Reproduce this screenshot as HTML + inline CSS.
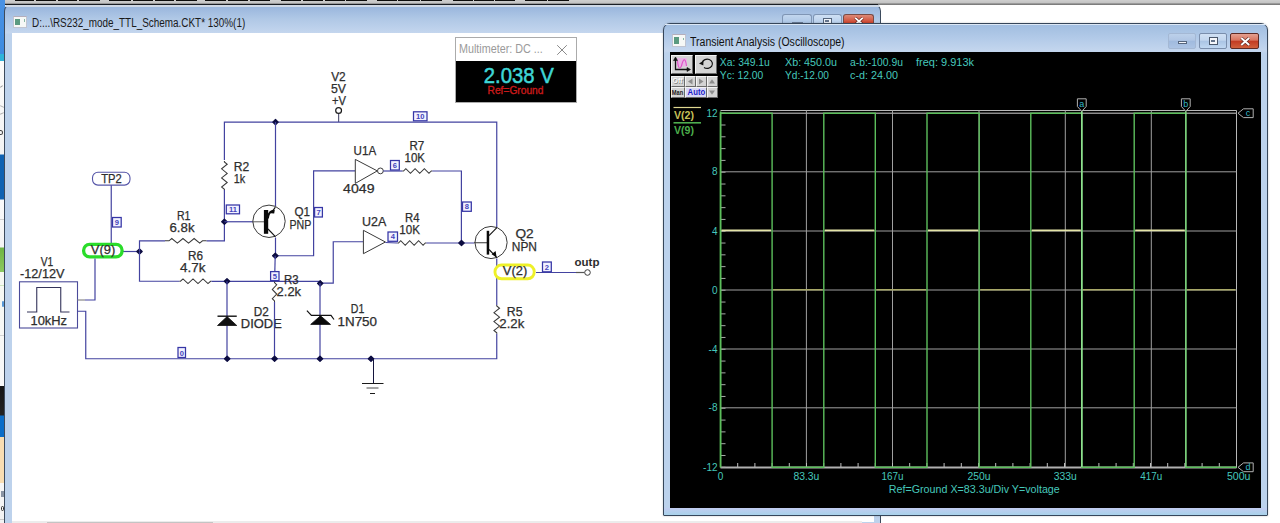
<!DOCTYPE html>
<html><head><meta charset="utf-8"><title>RS232 mode TTL Schema</title>
<style>
html,body{margin:0;padding:0;background:#fff;}
body{width:1280px;height:523px;overflow:hidden;position:relative;font-family:"Liberation Sans", "DejaVu Sans", sans-serif;}
.abs{position:absolute;}
svg text{font-family:"Liberation Sans", "DejaVu Sans", sans-serif;}
.btn{position:absolute;background:#d4d4d4;border-top:1px solid #f4f4f4;border-left:1px solid #f4f4f4;border-right:1px solid #6a6a6a;border-bottom:1px solid #6a6a6a;box-sizing:border-box;}
</style></head><body>

<!-- top strip -->
<div class="abs" style="left:0;top:0;width:1280px;height:5px;background:linear-gradient(#cfcfcf 0,#c4c4c4 55%,#9a9a9a 70%,#6e6e6e 100%)"></div>
<div class="abs" style="left:5px;top:3.5px;width:873px;height:1px;background:#222"></div>
<div style="position:absolute;left:14.5px;top:0;width:19.5px;height:1.1px;background:#0c0c0c"></div><div style="position:absolute;left:36px;top:0;width:20px;height:1.1px;background:#0c0c0c"></div><div style="position:absolute;left:58px;top:0;width:19px;height:1.1px;background:#0c0c0c"></div><div style="position:absolute;left:79px;top:0;width:21px;height:1.1px;background:#0c0c0c"></div><div style="position:absolute;left:109px;top:0;width:22px;height:1.1px;background:#0c0c0c"></div><div style="position:absolute;left:133px;top:0;width:20px;height:1.1px;background:#0c0c0c"></div><div style="position:absolute;left:155px;top:0;width:19px;height:1.1px;background:#0c0c0c"></div><div style="position:absolute;left:176px;top:0;width:21px;height:1.1px;background:#0c0c0c"></div><div style="position:absolute;left:205px;top:0;width:21px;height:1.1px;background:#0c0c0c"></div><div style="position:absolute;left:227.5px;top:0;width:20.5px;height:1.1px;background:#0c0c0c"></div><div style="position:absolute;left:249.5px;top:0;width:20.5px;height:1.1px;background:#0c0c0c"></div><div style="position:absolute;left:281px;top:0;width:20px;height:1.1px;background:#0c0c0c"></div><div style="position:absolute;left:302.5px;top:0;width:20.5px;height:1.1px;background:#0c0c0c"></div><div style="position:absolute;left:324.5px;top:0;width:20.0px;height:1.1px;background:#0c0c0c"></div><div style="position:absolute;left:346px;top:0;width:21px;height:1.1px;background:#0c0c0c"></div><div style="position:absolute;left:376.5px;top:0;width:20.0px;height:1.1px;background:#0c0c0c"></div><div style="position:absolute;left:398px;top:0;width:21.5px;height:1.1px;background:#0c0c0c"></div><div style="position:absolute;left:421px;top:0;width:21px;height:1.1px;background:#0c0c0c"></div><div style="position:absolute;left:453px;top:0;width:19.5px;height:1.1px;background:#0c0c0c"></div><div style="position:absolute;left:474px;top:0;width:19.5px;height:1.1px;background:#0c0c0c"></div><div style="position:absolute;left:495px;top:0;width:20px;height:1.1px;background:#0c0c0c"></div><div style="position:absolute;left:525px;top:0;width:21.5px;height:1.1px;background:#0c0c0c"></div><div style="position:absolute;left:548px;top:0;width:20.5px;height:1.1px;background:#0c0c0c"></div>

<!-- left desktop strip -->
<div class="abs" style="left:0;top:0;width:5px;height:523px;background:linear-gradient(#4a92e4 0,#3d8be0 54px,#2cb4da 54.5px,#2cb4da 61px,#fbfbfb 61.5px,#f3f3f3 154px,#0f62b2 155px,#0f62b2 199px,#fafafa 200px,#f4f4f4 247px,#6fb544 248px,#8cc860 271.5px,#f6f8f2 272.5px,#f8f8f8 385.5px,#161616 386.5px,#222 415px,#0a6dc8 416px,#0a6dc8 436.5px,#f8ddb2 437.5px,#f8ddb2 482.5px,#f6f6f6 483.5px,#f2f2f2 523px)"></div>
<div class="abs" style="left:0;top:86px;width:3px;height:1.2px;background:#9a9a9a;transform:rotate(-35deg)"></div>
<div class="abs" style="left:0;top:106px;width:4px;height:1.2px;background:#b0b0b0;transform:rotate(25deg)"></div>
<div class="abs" style="left:0;top:113px;width:4px;height:1.2px;background:#b0b0b0;transform:rotate(-25deg)"></div>
<div class="abs" style="left:0;top:130px;width:3px;height:5px;border:1.2px solid #444;border-left:none;border-radius:0 3px 3px 0;box-sizing:border-box"></div>
<div class="abs" style="left:0;top:219px;width:4px;height:1px;background:#d0d0d0"></div>
<div class="abs" style="left:0;top:285px;width:4px;height:1px;background:#cfe6c0"></div>
<div class="abs" style="left:1.5px;top:301px;width:2.5px;height:6px;background:#5a9ad8;border-radius:1px"></div>
<div class="abs" style="left:0;top:335px;width:4px;height:1px;background:#d4d4d4"></div>
<div class="abs" style="left:1px;top:491px;width:3px;height:6px;background:#8a94a4"></div>
<div class="abs" style="left:0.5px;top:506px;width:3.5px;height:5px;border:1.2px solid #333;box-sizing:border-box;border-radius:1.5px"></div>
<div class="abs" style="left:0;top:519px;width:4px;height:1px;background:#c8c8c8"></div>

<!-- circuit window -->
<div class="abs" style="left:4px;top:4px;width:877px;height:531px;box-sizing:border-box;border:1px solid #3c4a5c;border-top-color:#1a1e24;border-radius:7px 7px 0 0;background:linear-gradient(#9ab6dc 0,#9cb8de 3px,#b0c8e6 14px,#c4d6ee 28px,#bdd2ec 29px,#bdd2ec 100%)">
  <div class="abs" style="left:0;top:0;right:0;height:2.2px;background:#ced8e6;border-radius:6px 6px 0 0"></div>
  <!-- icon -->
  <div class="abs" style="left:8px;top:10.5px;width:14px;height:12px;background:#f6f8f6;border:1px solid #c0c4d0;border-top-color:#b4aebc;box-sizing:border-box"><div class="abs" style="left:1px;top:2px;width:5px;height:6.5px;background:#5a9a80"></div><div class="abs" style="left:9.5px;top:2.5px;width:1.5px;height:2.5px;background:#8ab8a4"></div></div>
  <div class="abs" style="left:27px;top:10.5px;font-size:12px;line-height:14px;color:#1a1a1a;white-space:nowrap;transform:scaleX(0.826);transform-origin:0 0" id="t1">D:...\RS232_mode_TTL_Schema.CKT* 130%(1)</div>
  <!-- buttons -->
  <div class="abs" style="left:777px;top:9px;width:28px;height:11px;border:1px solid #7f95b4;border-bottom:none;border-radius:3px 3px 0 0;background:linear-gradient(#c2d6ee,#a4c0e2)"><div class="abs" style="left:9px;top:7px;width:9px;height:3px;background:#eef2f8;border:1px solid #6a7c96"></div></div>
  <div class="abs" style="left:808px;top:9px;width:27px;height:11px;border:1px solid #7f95b4;border-bottom:none;border-radius:3px 3px 0 0;background:linear-gradient(#cfe0f4,#b0c9e8)"><div class="abs" style="left:8.5px;top:2.5px;width:9px;height:9px;border:1.5px solid #55657c;background:#eef2f8;box-sizing:border-box"><div class="abs" style="left:1px;top:1.5px;width:4px;height:2px;background:#65758c"></div></div></div>
  <div class="abs" style="left:838px;top:8.5px;width:29px;height:12px;border:1px solid #7a4a44;border-bottom:none;border-radius:3px 3px 0 0;background:linear-gradient(#dd8a78,#cf4a34 60%,#c03420)"><svg class="abs" style="left:9.5px;top:2.5px" width="10" height="8.5" viewBox="0 0 12 10"><path d="M1.5 1 L10.5 9 M10.5 1 L1.5 9" stroke="#6a2a22" stroke-width="3.8" fill="none"/><path d="M1.5 1 L10.5 9 M10.5 1 L1.5 9" stroke="#fff" stroke-width="2.2" fill="none"/></svg></div>
  <!-- client -->
  <div class="abs" style="left:7px;top:28px;width:862px;height:489px;background:#fff"></div>
  <!-- bottom scrollbar -->
  <div class="abs" style="left:7px;top:516px;width:850px;height:4px;background:#ececec"></div>
  <div class="abs" style="left:42px;top:516.5px;width:166px;height:4px;background:#c4c4c4"></div>
</div>

<!-- multimeter -->
<div class="abs" style="left:455px;top:37px;width:121.5px;height:66px;box-sizing:border-box;border:1px solid #ababab;background:#fff">
  <div class="abs" style="left:0;top:23px;width:119.5px;height:41px;background:#000"></div>
  <div class="abs" style="left:3px;top:4px;font-size:12px;line-height:14px;color:#9a9a9a;white-space:nowrap;transform:scaleX(0.897);transform-origin:0 0" id="mmt">Multimeter: DC ...</div>
  <svg class="abs" style="left:100px;top:6px" width="12" height="12" viewBox="0 0 12 12"><path d="M1.2 1.2 L10.8 10.8 M10.8 1.2 L1.2 10.8" stroke="#8a8a8a" stroke-width="1" fill="none"/></svg>
</div>

<!-- scope window -->
<div class="abs" style="left:663px;top:23px;width:605px;height:493px;box-sizing:border-box;border:1px solid #36465a;border-radius:7px 7px 1px 1px;background:linear-gradient(#a0bde0 0,#b2cae8 14px,#c4d6ee 27px,#bcd2ec 29px,#bcd2ec 100%);box-shadow:0 0 2px rgba(0,0,0,.25)">
  <div class="abs" style="left:1px;top:0;right:1px;height:1px;background:#dce8f6"></div>
  <div class="abs" style="left:0;bottom:0;width:603px;height:7px;background:linear-gradient(#c2ccf0,#a8d2ea)"></div>
  <div class="abs" style="left:6px;top:28px;width:591px;height:456px;background:#000"></div>
  <!-- icon -->
  <div class="abs" style="left:8px;top:10px;width:14px;height:12.5px;background:#f6f8f6;border:1px solid #c0c4d0;border-top-color:#b4aebc;box-sizing:border-box"><div class="abs" style="left:1px;top:2px;width:5px;height:7px;background:#5a9a80"></div><div class="abs" style="left:9.5px;top:2.5px;width:1.5px;height:2.5px;background:#8ab8a4"></div></div>
  <div class="abs" style="left:26px;top:10.5px;font-size:12px;line-height:14px;color:#111;white-space:nowrap;transform:scaleX(0.877);transform-origin:0 0" id="t2">Transient Analysis (Oscilloscope)</div>
  <!-- caption buttons -->
  <div class="abs" style="left:504px;top:9px;width:28px;height:16px;box-sizing:border-box;border:1px solid #a4b8d4;border-radius:2px;background:linear-gradient(#bcd0ea 0,#b0c6e4 45%,#a0bade 50%,#acc4e4 100%)"><div class="abs" style="left:9px;top:7px;width:9px;height:3px;box-sizing:border-box;background:#f4f6fa;border:1px solid #55657c"></div></div>
  <div class="abs" style="left:535px;top:9px;width:28px;height:16px;box-sizing:border-box;border:1px solid #7a8eac;border-radius:2px;background:linear-gradient(#d0e0f4 0,#c2d6ee 45%,#aac4e4 50%,#c0d8f2 100%)"><div class="abs" style="left:9px;top:3px;width:9px;height:8px;box-sizing:border-box;background:#f4f6fa;border:1.5px solid #4a586c"><div class="abs" style="left:1px;top:1.5px;width:4px;height:2px;background:#65758c"></div></div></div>
  <div class="abs" style="left:566px;top:9px;width:29px;height:16px;box-sizing:border-box;border:1px solid #5e2a24;border-radius:2px;background:linear-gradient(#e4a090 0,#d8745e 45%,#c23a22 50%,#d0603c 100%)"><svg class="abs" style="left:8.5px;top:2.5px" width="10.5" height="9" viewBox="0 0 12 10"><path d="M1.5 1 L10.5 9 M10.5 1 L1.5 9" stroke="#5a2a24" stroke-width="3.6" fill="none"/><path d="M1.5 1 L10.5 9 M10.5 1 L1.5 9" stroke="#fff" stroke-width="2.2" fill="none"/></svg></div>
</div>

<!-- scope toolbar buttons -->
<div class="btn" style="left:671px;top:55px;width:22px;height:19px"></div>
<div class="btn" style="left:695px;top:55px;width:22px;height:19px"></div>
<div class="btn" style="left:671px;top:76px;width:13.5px;height:10.5px"></div>
<div class="btn" style="left:685px;top:76px;width:10.5px;height:10.5px"></div>
<div class="btn" style="left:696px;top:76px;width:10.5px;height:10.5px"></div>
<div class="btn" style="left:707px;top:76px;width:10.5px;height:10.5px"></div>
<div class="btn" style="left:671px;top:87px;width:13.5px;height:10.5px"></div>
<div class="btn" style="left:685px;top:87px;width:21.5px;height:10.5px;background:#d8d8f6"></div>
<div class="btn" style="left:707px;top:87px;width:10.5px;height:10.5px"></div>

<svg class="abs" style="left:0;top:0" width="1280" height="523" viewBox="0 0 1280 523">
<!-- toolbar icons -->
<rect x="676.8" y="58" width="10" height="8.5" fill="#e8b4e4"/>
<g fill="none" stroke-width="1.3">
<path d="M675.5 58.5 L675.5 69.5 L688.5 69.5" stroke="#111"/>
<path d="M673.5 60.5 L675.5 57 L677.5 60.5 Z M687 67.5 L690.5 69.5 L687 71.5 Z" fill="#111" stroke="#111" stroke-width="0.6"/>
<path d="M677.5 61 C678.5 70 680.5 70 682 64 C683.5 58 685.5 58 686.5 66" stroke="#e050c8" stroke-width="1.1"/>
<path d="M702.2 62.6 A5.2 4.6 0 1 1 704 67.4" stroke="#111" stroke-width="1.2"/>
<path d="M699 63.5 L703.5 60.8 L703.3 65.6 Z" fill="#111" stroke="none"/>
</g>
<path d="M692.5 78.5 L692.5 84.5 L688 81.5 Z" fill="#8e8e8e"/>
<path d="M699 78.5 L699 84.5 L703.5 81.5 Z" fill="#8e8e8e"/>
<path d="M709 83.5 L715 83.5 L712 79.3 Z" fill="#8e8e8e"/>
<path d="M709 90.5 L715 90.5 L712 94.7 Z" fill="#8e8e8e"/>
<text x="673.2" y="83.8" font-size="8" font-weight="bold" fill="#8a8a8a" textLength="10" lengthAdjust="spacingAndGlyphs">Off</text>
<text x="672.6" y="83.3" font-size="8" font-weight="bold" fill="#fafafa" textLength="10" lengthAdjust="spacingAndGlyphs">Off</text>
<text x="671.8" y="95" font-size="8" font-weight="bold" fill="#1a1a1a" textLength="11.4" lengthAdjust="spacingAndGlyphs">Man</text>
<text x="687.6" y="95" font-size="8.2" font-weight="bold" fill="#1c1cc8" textLength="17.6" lengthAdjust="spacingAndGlyphs">Auto</text>
<!-- multimeter reading -->
<text x="483.8" y="82.5" font-size="21.5" fill="#3fd6d6" stroke="#3fd6d6" stroke-width="0.5" textLength="70" lengthAdjust="spacingAndGlyphs">2.038 V</text>
<text x="487.5" y="94.3" font-size="10.5" fill="#c81a1a" stroke="#c81a1a" stroke-width="0.35" textLength="56" lengthAdjust="spacingAndGlyphs">Ref=Ground</text>
<text x="331.2" y="80.5" font-size="12" fill="#2e2e2e" text-anchor="start" font-weight="normal" stroke="#2e2e2e" stroke-width="0.25" textLength="14.5" lengthAdjust="spacingAndGlyphs" >V2</text>
<text x="331" y="92.5" font-size="12" fill="#2e2e2e" text-anchor="start" font-weight="normal" stroke="#2e2e2e" stroke-width="0.25" textLength="15" lengthAdjust="spacingAndGlyphs" >5V</text>
<text x="332" y="105" font-size="12" fill="#2e2e2e" text-anchor="start" font-weight="normal" stroke="#2e2e2e" stroke-width="0.25" textLength="14" lengthAdjust="spacingAndGlyphs" >+V</text>
<path d="M338.60 113.50 L338.60 122.10" fill="none" stroke="#5a5a78" stroke-width="1.2" />
<circle cx="338.6" cy="110.5" r="2.9" fill="#fff" stroke="#1a1a1a" stroke-width="1.2"/>
<path d="M224.40 160.00 L224.40 122.10 L496.75 122.10 L496.75 227.00" fill="none" stroke="#4343a0" stroke-width="1.2" />
<path d="M272.80 122.1 L275.5 119.40 L278.20 122.1 L275.5 124.80 Z" fill="#0c0c40" stroke="#0c0c40" stroke-width="1.2" stroke-linejoin="round"/>
<rect x="413.5" y="111.8" width="13.5" height="9.0" fill="#f2f2ff" stroke="#3636a6" stroke-width="1.25"/>
<text x="420.25" y="118.8" font-size="7.6" fill="#4444bc" text-anchor="middle" font-weight="bold" >10</text>
<path d="M275.50 122.10 L275.50 206.00" fill="none" stroke="#4343a0" stroke-width="1.2" />
<path d="M224.40 161.00 L224.40 162.00 L227.20 164.28 L221.60 168.82 L227.20 173.38 L221.60 177.93 L227.20 182.48 L221.60 187.03 L224.40 189.30 L224.40 190.30" fill="none" stroke="#3a3a3a" stroke-width="1.05" stroke-linejoin="miter"/>
<text x="233.8" y="171.3" font-size="12" fill="#2e2e2e" text-anchor="start" font-weight="normal" stroke="#2e2e2e" stroke-width="0.25" textLength="15.5" lengthAdjust="spacingAndGlyphs" >R2</text>
<text x="233.8" y="183.3" font-size="12" fill="#2e2e2e" text-anchor="start" font-weight="normal" stroke="#2e2e2e" stroke-width="0.25" textLength="11.5" lengthAdjust="spacingAndGlyphs" >1k</text>
<path d="M224.40 190.00 L224.40 240.80 L206.50 240.80" fill="none" stroke="#4343a0" stroke-width="1.2" />
<path d="M221.70 221.75 L224.4 219.05 L227.10 221.75 L224.4 224.45 Z" fill="#0c0c40" stroke="#0c0c40" stroke-width="1.2" stroke-linejoin="round"/>
<rect x="226.3" y="205" width="13.199999999999989" height="8.800000000000011" fill="#f2f2ff" stroke="#3636a6" stroke-width="1.25"/>
<text x="232.9" y="211.8" font-size="7.6" fill="#4444bc" text-anchor="middle" font-weight="bold" >11</text>
<path d="M224.40 221.75 L253.00 221.75" fill="none" stroke="#4343a0" stroke-width="1.2" />
<path d="M252.50 221.75 L264.00 221.75" fill="none" stroke="#777" stroke-width="1.2" />
<rect x="92.5" y="172.3" width="37.5" height="12.8" rx="5.5" ry="5.5" fill="#fff" stroke="#5555a8" stroke-width="1.1"/>
<text x="101.3" y="183.2" font-size="12" fill="#2e2e2e" text-anchor="start" font-weight="normal" stroke="#2e2e2e" stroke-width="0.25" textLength="20.5" lengthAdjust="spacingAndGlyphs" >TP2</text>
<path d="M111.25 185.20 L111.25 244.50" fill="none" stroke="#4343a0" stroke-width="1.2" />
<rect x="112.5" y="217.5" width="8.700000000000003" height="9.5" fill="#f2f2ff" stroke="#3636a6" stroke-width="1.25"/>
<text x="116.85" y="225.0" font-size="7.6" fill="#4444bc" text-anchor="middle" font-weight="bold" >9</text>
<path d="M123.00 251.50 L139.50 251.50" fill="none" stroke="#4343a0" stroke-width="1.2" />
<rect x="83.6" y="244.4" width="38.5" height="12.4" rx="6" ry="6" fill="#fff" stroke="#2adc2a" stroke-width="3.3"/>
<text x="90.8" y="253.7" font-size="12" fill="#2e2e2e" text-anchor="start" font-weight="normal" stroke="#2e2e2e" stroke-width="0.25" textLength="24.4" lengthAdjust="spacingAndGlyphs" >V(9)</text>
<path d="M136.80 251.5 L139.5 248.80 L142.20 251.5 L139.5 254.20 Z" fill="#0c0c40" stroke="#0c0c40" stroke-width="1.2" stroke-linejoin="round"/>
<path d="M139.50 251.50 L139.50 240.80 L165.00 240.80" fill="none" stroke="#4343a0" stroke-width="1.2" />
<path d="M165.00 240.80 L169.00 240.80 L171.79 238.50 L177.38 243.10 L182.96 238.50 L188.54 243.10 L194.12 238.50 L199.71 243.10 L202.50 240.80 L206.50 240.80" fill="none" stroke="#3a3a3a" stroke-width="1.05" stroke-linejoin="miter"/>
<text x="177" y="220" font-size="12" fill="#2e2e2e" text-anchor="start" font-weight="normal" stroke="#2e2e2e" stroke-width="0.25" textLength="13.5" lengthAdjust="spacingAndGlyphs" >R1</text>
<text x="169.5" y="232" font-size="12" fill="#2e2e2e" text-anchor="start" font-weight="normal" stroke="#2e2e2e" stroke-width="0.25" textLength="25" lengthAdjust="spacingAndGlyphs" >6.8k</text>
<path d="M139.50 251.50 L139.50 281.25 L179.50 281.25" fill="none" stroke="#4343a0" stroke-width="1.2" />
<path d="M179.50 281.25 L180.50 281.25 L183.00 278.95 L188.00 283.55 L193.00 278.95 L198.00 283.55 L203.00 278.95 L208.00 283.55 L210.50 281.25 L211.50 281.25" fill="none" stroke="#3a3a3a" stroke-width="1.05" stroke-linejoin="miter"/>
<text x="188" y="260" font-size="12" fill="#2e2e2e" text-anchor="start" font-weight="normal" stroke="#2e2e2e" stroke-width="0.25" textLength="15" lengthAdjust="spacingAndGlyphs" >R6</text>
<text x="180" y="272" font-size="12" fill="#2e2e2e" text-anchor="start" font-weight="normal" stroke="#2e2e2e" stroke-width="0.25" textLength="25.5" lengthAdjust="spacingAndGlyphs" >4.7k</text>
<path d="M211.50 281.30 L319.50 281.40" fill="none" stroke="#4343a0" stroke-width="1.2" />
<path d="M320.00 283.20 L333.25 283.20 L333.25 241.75 L363.00 241.75" fill="none" stroke="#4343a0" stroke-width="1.2" />
<path d="M224.30 281.25 L227 278.55 L229.70 281.25 L227 283.95 Z" fill="#0c0c40" stroke="#0c0c40" stroke-width="1.2" stroke-linejoin="round"/>
<path d="M317.50 283.3 L320.2 280.60 L322.90 283.3 L320.2 286.00 Z" fill="#0c0c40" stroke="#0c0c40" stroke-width="1.2" stroke-linejoin="round"/>
<rect x="19.5" y="281.8" width="58" height="46.2" fill="#fff" stroke="#4a4a9a" stroke-width="1.1"/>
<path d="M27.00 312.00 L36.75 312.00 L36.75 287.50 L60.75 287.50 L60.75 312.00 L69.50 312.00" fill="none" stroke="#34345a" stroke-width="1.1" />
<text x="40.8" y="265.8" font-size="12" fill="#2e2e2e" text-anchor="start" font-weight="normal" stroke="#2e2e2e" stroke-width="0.25" textLength="12.5" lengthAdjust="spacingAndGlyphs" >V1</text>
<text x="20" y="278" font-size="12" fill="#2e2e2e" text-anchor="start" font-weight="normal" stroke="#2e2e2e" stroke-width="0.25" textLength="44.5" lengthAdjust="spacingAndGlyphs" >-12/12V</text>
<text x="30.5" y="325" font-size="12" fill="#2e2e2e" text-anchor="start" font-weight="normal" stroke="#2e2e2e" stroke-width="0.25" textLength="36.5" lengthAdjust="spacingAndGlyphs" >10kHz</text>
<path d="M77.50 300.00 L85.00 300.00" fill="none" stroke="#888" stroke-width="1.2" />
<path d="M85.00 300.00 L95.00 300.00 L95.00 258.50" fill="none" stroke="#4343a0" stroke-width="1.2" />
<path d="M77.50 311.25 L85.75 311.25 L85.75 358.75 L496.75 358.75 L496.75 333.75" fill="none" stroke="#4343a0" stroke-width="1.2" />
<rect x="178" y="347.5" width="7.5" height="10.0" fill="#f2f2ff" stroke="#3636a6" stroke-width="1.25"/>
<text x="181.75" y="355.5" font-size="7.6" fill="#4444bc" text-anchor="middle" font-weight="bold" >0</text>
<path d="M227.00 281.25 L227.00 358.75" fill="none" stroke="#4343a0" stroke-width="1.2" />
<path d="M217.5 325.5 L236.75 325.5 L227.1 316.6 Z" fill="#111" stroke="#111" stroke-width="0.8"/>
<path d="M217.50 316.20 L236.75 316.20" fill="none" stroke="#111" stroke-width="1.4" />
<text x="253.8" y="315.8" font-size="12" fill="#2e2e2e" text-anchor="start" font-weight="normal" stroke="#2e2e2e" stroke-width="0.25" textLength="15" lengthAdjust="spacingAndGlyphs" >D2</text>
<text x="240.8" y="328.2" font-size="12" fill="#2e2e2e" text-anchor="start" font-weight="normal" stroke="#2e2e2e" stroke-width="0.25" textLength="41" lengthAdjust="spacingAndGlyphs" >DIODE</text>
<path d="M224.50 358.75 L227.2 356.05 L229.90 358.75 L227.2 361.45 Z" fill="#0c0c40" stroke="#0c0c40" stroke-width="1.2" stroke-linejoin="round"/>
<circle cx="269" cy="221.3" r="16.2" fill="none" stroke="#3a3a3a" stroke-width="1"/>
<rect x="263.9" y="210" width="4.3" height="23.8" fill="#0a0a0a"/>
<path d="M268 218.5 L268 213.6 Q269.4 210.6 272 210 L274.8 209.8 L274.2 213.4 L270.8 213.3 Q269.4 214.2 268.9 218.5 Z" fill="#0a0a0a"/>
<path d="M273.00 210.40 L275.40 207.20" fill="none" stroke="#111" stroke-width="1.1" />
<path d="M268.00 229.00 L275.40 236.60" fill="none" stroke="#111" stroke-width="1.1" />
<text x="294.5" y="216.3" font-size="12" fill="#2e2e2e" text-anchor="start" font-weight="normal" stroke="#2e2e2e" stroke-width="0.25" textLength="15.5" lengthAdjust="spacingAndGlyphs" >Q1</text>
<text x="289.5" y="228.8" font-size="12" fill="#2e2e2e" text-anchor="start" font-weight="normal" stroke="#2e2e2e" stroke-width="0.25" textLength="21.8" lengthAdjust="spacingAndGlyphs" >PNP</text>
<rect x="314.6" y="207.5" width="7.7999999999999545" height="9.5" fill="#f2f2ff" stroke="#3636a6" stroke-width="1.25"/>
<text x="318.5" y="215.0" font-size="7.6" fill="#4444bc" text-anchor="middle" font-weight="bold" >7</text>
<path d="M275.50 237.50 L275.50 255.75 L313.60 255.75 L313.60 170.90 L355.00 170.90" fill="none" stroke="#4343a0" stroke-width="1.2" />
<path d="M272.60 255.75 L275.3 253.05 L278.00 255.75 L275.3 258.45 Z" fill="#0c0c40" stroke="#0c0c40" stroke-width="1.2" stroke-linejoin="round"/>
<path d="M275.20 255.75 L274.60 281.25" fill="none" stroke="#4343a0" stroke-width="1.2" />
<rect x="270.6" y="271.6" width="8.399999999999977" height="9.0" fill="#f2f2ff" stroke="#3636a6" stroke-width="1.25"/>
<text x="274.8" y="278.6" font-size="7.6" fill="#4444bc" text-anchor="middle" font-weight="bold" >5</text>
<path d="M274.50 281.50 L274.50 282.50 L276.70 284.81 L272.30 289.44 L276.70 294.06 L272.30 298.69 L274.50 301.00 L274.50 302.00" fill="none" stroke="#3a3a3a" stroke-width="1.05" stroke-linejoin="miter"/>
<path d="M274.50 302.00 L274.50 358.75" fill="none" stroke="#4343a0" stroke-width="1.2" />
<text x="284" y="283.6" font-size="12" fill="#2e2e2e" text-anchor="start" font-weight="normal" stroke="#2e2e2e" stroke-width="0.25" textLength="14.6" lengthAdjust="spacingAndGlyphs" >R3</text>
<text x="276.6" y="295.8" font-size="12" fill="#2e2e2e" text-anchor="start" font-weight="normal" stroke="#2e2e2e" stroke-width="0.25" textLength="24.5" lengthAdjust="spacingAndGlyphs" >2.2k</text>
<path d="M271.90 358.75 L274.6 356.05 L277.30 358.75 L274.6 361.45 Z" fill="#0c0c40" stroke="#0c0c40" stroke-width="1.2" stroke-linejoin="round"/>
<path d="M320.00 283.00 L320.00 358.75" fill="none" stroke="#4343a0" stroke-width="1.2" />
<path d="M310.7 324.4 L330.5 324.4 L320.5 315.8 Z" fill="#0a0a0a" stroke="#0a0a0a" stroke-width="0.8"/>
<path d="M306.90 310.70 L311.40 315.40 L331.00 315.40 L334.00 319.50" fill="none" stroke="#111" stroke-width="1.2" />
<text x="350.8" y="313.3" font-size="12" fill="#2e2e2e" text-anchor="start" font-weight="normal" stroke="#2e2e2e" stroke-width="0.25" textLength="13.5" lengthAdjust="spacingAndGlyphs" >D1</text>
<text x="337.5" y="326.3" font-size="12" fill="#2e2e2e" text-anchor="start" font-weight="normal" stroke="#2e2e2e" stroke-width="0.25" textLength="39.5" lengthAdjust="spacingAndGlyphs" >1N750</text>
<path d="M317.30 358.75 L320 356.05 L322.70 358.75 L320 361.45 Z" fill="#0c0c40" stroke="#0c0c40" stroke-width="1.2" stroke-linejoin="round"/>
<path d="M368.30 358.75 L371 356.05 L373.70 358.75 L371 361.45 Z" fill="#0c0c40" stroke="#0c0c40" stroke-width="1.2" stroke-linejoin="round"/>
<path d="M373.50 358.75 L373.50 383.50" fill="none" stroke="#14143c" stroke-width="1.0" />
<path d="M362.00 383.50 L383.50 383.50" fill="none" stroke="#1a1a1a" stroke-width="1.0" />
<path d="M366.50 388.00 L378.50 388.00" fill="none" stroke="#6a6a6a" stroke-width="1.2" />
<path d="M370.00 393.50 L375.00 393.50" fill="none" stroke="#1a1a1a" stroke-width="1.0" />
<path d="M355.3 159.4 L355.3 183.4 L377.3 170.9 Z" fill="#fff" stroke="#3a3a3a" stroke-width="1"/>
<circle cx="380.4" cy="170.9" r="2.9" fill="#fff" stroke="#3a3a3a" stroke-width="1"/>
<text x="353.6" y="154.8" font-size="12" fill="#2e2e2e" text-anchor="start" font-weight="normal" stroke="#2e2e2e" stroke-width="0.25" textLength="22.6" lengthAdjust="spacingAndGlyphs" >U1A</text>
<text x="343.1" y="193" font-size="12" fill="#2e2e2e" text-anchor="start" font-weight="normal" stroke="#2e2e2e" stroke-width="0.25" textLength="31.4" lengthAdjust="spacingAndGlyphs" >4049</text>
<path d="M383.30 171.00 L402.50 171.00" fill="none" stroke="#4343a0" stroke-width="1.2" />
<rect x="390.5" y="160.5" width="8.800000000000011" height="9.5" fill="#f2f2ff" stroke="#3636a6" stroke-width="1.25"/>
<text x="394.9" y="168.0" font-size="7.6" fill="#4444bc" text-anchor="middle" font-weight="bold" >6</text>
<path d="M402.50 171.00 L403.50 171.00 L405.82 168.70 L410.45 173.30 L415.08 168.70 L419.72 173.30 L424.35 168.70 L428.98 173.30 L431.30 171.00 L432.30 171.00" fill="none" stroke="#3a3a3a" stroke-width="1.05" stroke-linejoin="miter"/>
<text x="409.5" y="150" font-size="12" fill="#2e2e2e" text-anchor="start" font-weight="normal" stroke="#2e2e2e" stroke-width="0.25" textLength="14.8" lengthAdjust="spacingAndGlyphs" >R7</text>
<text x="404.5" y="162" font-size="12" fill="#2e2e2e" text-anchor="start" font-weight="normal" stroke="#2e2e2e" stroke-width="0.25" textLength="20.5" lengthAdjust="spacingAndGlyphs" >10K</text>
<path d="M432.30 171.00 L461.40 171.00 L461.40 243.00" fill="none" stroke="#4343a0" stroke-width="1.2" />
<rect x="462.5" y="202" width="8.800000000000011" height="9.300000000000011" fill="#f2f2ff" stroke="#3636a6" stroke-width="1.25"/>
<text x="466.9" y="209.3" font-size="7.6" fill="#4444bc" text-anchor="middle" font-weight="bold" >8</text>
<path d="M363.4 230.3 L363.4 253.7 L385.4 242 Z" fill="#fff" stroke="#3a3a3a" stroke-width="1"/>
<text x="362" y="226.3" font-size="12" fill="#2e2e2e" text-anchor="start" font-weight="normal" stroke="#2e2e2e" stroke-width="0.25" textLength="24.3" lengthAdjust="spacingAndGlyphs" >U2A</text>
<path d="M385.40 242.50 L397.50 243.00" fill="none" stroke="#4343a0" stroke-width="1.2" />
<rect x="388" y="232" width="9.5" height="9.300000000000011" fill="#f2f2ff" stroke="#3636a6" stroke-width="1.25"/>
<text x="392.75" y="239.3" font-size="7.6" fill="#4444bc" text-anchor="middle" font-weight="bold" >4</text>
<path d="M397.50 243.00 L398.50 243.00 L400.73 240.70 L405.20 245.30 L409.67 240.70 L414.13 245.30 L418.60 240.70 L423.07 245.30 L425.30 243.00 L426.30 243.00" fill="none" stroke="#3a3a3a" stroke-width="1.05" stroke-linejoin="miter"/>
<text x="405" y="221.8" font-size="12" fill="#2e2e2e" text-anchor="start" font-weight="normal" stroke="#2e2e2e" stroke-width="0.25" textLength="14.5" lengthAdjust="spacingAndGlyphs" >R4</text>
<text x="399.3" y="233.8" font-size="12" fill="#2e2e2e" text-anchor="start" font-weight="normal" stroke="#2e2e2e" stroke-width="0.25" textLength="20.7" lengthAdjust="spacingAndGlyphs" >10K</text>
<path d="M426.30 243.00 L474.00 243.00" fill="none" stroke="#4343a0" stroke-width="1.2" />
<path d="M474.00 242.70 L487.00 242.70" fill="none" stroke="#555" stroke-width="1.2" />
<path d="M458.80 243 L461.5 240.30 L464.20 243 L461.5 245.70 Z" fill="#0c0c40" stroke="#0c0c40" stroke-width="1.2" stroke-linejoin="round"/>
<circle cx="491.05" cy="242.5" r="16.1" fill="none" stroke="#3a3a3a" stroke-width="1"/>
<rect x="486.7" y="230.8" width="2.5" height="23.8" fill="#0a0a0a"/>
<path d="M489.00 235.60 L496.90 227.60" fill="none" stroke="#111" stroke-width="1.1" />
<path d="M489.00 249.50 L496.90 257.60" fill="none" stroke="#111" stroke-width="1.1" />
<path d="M496.6 257.2 L491.6 254.2 L495.6 251 Z" fill="#0a0a0a"/>
<text x="515.5" y="238" font-size="12" fill="#2e2e2e" text-anchor="start" font-weight="normal" stroke="#2e2e2e" stroke-width="0.25" textLength="18.2" lengthAdjust="spacingAndGlyphs" >Q2</text>
<text x="511.8" y="250.5" font-size="12" fill="#2e2e2e" text-anchor="start" font-weight="normal" stroke="#2e2e2e" stroke-width="0.25" textLength="25.2" lengthAdjust="spacingAndGlyphs" >NPN</text>
<path d="M496.75 258.50 L496.75 305.00" fill="none" stroke="#4343a0" stroke-width="1.2" />
<path d="M536.00 272.50 L576.00 272.50" fill="none" stroke="#4343a0" stroke-width="1.2" />
<path d="M576.00 272.50 L584.50 272.50" fill="none" stroke="#555" stroke-width="1.2" />
<rect x="495" y="265" width="39.2" height="13.8" rx="6.5" ry="6.5" fill="#fff" stroke="#eef028" stroke-width="2.9"/>
<text x="502.8" y="275.4" font-size="12" fill="#2e2e2e" text-anchor="start" font-weight="normal" stroke="#2e2e2e" stroke-width="0.25" textLength="24.4" lengthAdjust="spacingAndGlyphs" >V(2)</text>
<rect x="542.5" y="262" width="8.799999999999955" height="9.800000000000011" fill="#f2f2ff" stroke="#3636a6" stroke-width="1.25"/>
<text x="546.9" y="269.8" font-size="7.6" fill="#4444bc" text-anchor="middle" font-weight="bold" >2</text>
<circle cx="587.5" cy="272.5" r="2.8" fill="#fff" stroke="#3a3a3a" stroke-width="1"/>
<text x="574.5" y="265.5" font-size="11.5" fill="#2e2e2e" text-anchor="start" font-weight="bold" textLength="25" lengthAdjust="spacingAndGlyphs" >outp</text>
<path d="M496.75 305.00 L496.75 306.00 L499.55 308.23 L493.95 312.69 L499.55 317.15 L493.95 321.60 L499.55 326.06 L493.95 330.52 L496.75 332.75 L496.75 333.75" fill="none" stroke="#3a3a3a" stroke-width="1.05" stroke-linejoin="miter"/>
<text x="506.8" y="315.5" font-size="12" fill="#2e2e2e" text-anchor="start" font-weight="normal" stroke="#2e2e2e" stroke-width="0.25" textLength="15.7" lengthAdjust="spacingAndGlyphs" >R5</text>
<text x="499.3" y="328" font-size="12" fill="#2e2e2e" text-anchor="start" font-weight="normal" stroke="#2e2e2e" stroke-width="0.25" textLength="25" lengthAdjust="spacingAndGlyphs" >2.2k</text>
<path d="M720.50 110.50 L1236.50 110.50 L1236.50 468.00" fill="none" stroke="#b8b8b8" stroke-width="1" />
<path d="M720.50 113.20 L1236.50 113.20" fill="none" stroke="#8c8c8c" stroke-width="1.5" />
<path d="M806.40 110.50 L806.40 467.50" fill="none" stroke="#a0a0a0" stroke-width="1" />
<path d="M892.50 110.50 L892.50 467.50" fill="none" stroke="#a0a0a0" stroke-width="1" />
<path d="M979.00 110.50 L979.00 467.50" fill="none" stroke="#a0a0a0" stroke-width="1" />
<path d="M1065.30 110.50 L1065.30 467.50" fill="none" stroke="#a0a0a0" stroke-width="1" />
<path d="M1151.30 110.50 L1151.30 467.50" fill="none" stroke="#a0a0a0" stroke-width="1" />
<path d="M720.50 171.80 L1236.50 171.80" fill="none" stroke="#a0a0a0" stroke-width="1" />
<path d="M720.50 231.00 L1236.50 231.00" fill="none" stroke="#a0a0a0" stroke-width="1" />
<path d="M720.50 290.00 L1236.50 290.00" fill="none" stroke="#a0a0a0" stroke-width="1" />
<path d="M720.50 349.00 L1236.50 349.00" fill="none" stroke="#a0a0a0" stroke-width="1" />
<path d="M720.50 407.80 L1236.50 407.80" fill="none" stroke="#a0a0a0" stroke-width="1" />
<path d="M720.50 467.60 L1236.50 467.60" fill="none" stroke="#b0b0b0" stroke-width="2" />
<path d="M720.50 463.00 L720.50 467.00" fill="none" stroke="#c0c0c0" stroke-width="1" />
<path d="M737.70 463.00 L737.70 467.00" fill="none" stroke="#c0c0c0" stroke-width="1" />
<path d="M754.90 463.00 L754.90 467.00" fill="none" stroke="#c0c0c0" stroke-width="1" />
<path d="M772.10 463.00 L772.10 467.00" fill="none" stroke="#c0c0c0" stroke-width="1" />
<path d="M789.30 463.00 L789.30 467.00" fill="none" stroke="#c0c0c0" stroke-width="1" />
<path d="M806.50 463.00 L806.50 467.00" fill="none" stroke="#c0c0c0" stroke-width="1" />
<path d="M823.70 463.00 L823.70 467.00" fill="none" stroke="#c0c0c0" stroke-width="1" />
<path d="M840.90 463.00 L840.90 467.00" fill="none" stroke="#c0c0c0" stroke-width="1" />
<path d="M858.10 463.00 L858.10 467.00" fill="none" stroke="#c0c0c0" stroke-width="1" />
<path d="M875.30 463.00 L875.30 467.00" fill="none" stroke="#c0c0c0" stroke-width="1" />
<path d="M892.50 463.00 L892.50 467.00" fill="none" stroke="#c0c0c0" stroke-width="1" />
<path d="M909.70 463.00 L909.70 467.00" fill="none" stroke="#c0c0c0" stroke-width="1" />
<path d="M926.90 463.00 L926.90 467.00" fill="none" stroke="#c0c0c0" stroke-width="1" />
<path d="M944.10 463.00 L944.10 467.00" fill="none" stroke="#c0c0c0" stroke-width="1" />
<path d="M961.30 463.00 L961.30 467.00" fill="none" stroke="#c0c0c0" stroke-width="1" />
<path d="M978.50 463.00 L978.50 467.00" fill="none" stroke="#c0c0c0" stroke-width="1" />
<path d="M995.70 463.00 L995.70 467.00" fill="none" stroke="#c0c0c0" stroke-width="1" />
<path d="M1012.90 463.00 L1012.90 467.00" fill="none" stroke="#c0c0c0" stroke-width="1" />
<path d="M1030.10 463.00 L1030.10 467.00" fill="none" stroke="#c0c0c0" stroke-width="1" />
<path d="M1047.30 463.00 L1047.30 467.00" fill="none" stroke="#c0c0c0" stroke-width="1" />
<path d="M1064.50 463.00 L1064.50 467.00" fill="none" stroke="#c0c0c0" stroke-width="1" />
<path d="M1081.70 463.00 L1081.70 467.00" fill="none" stroke="#c0c0c0" stroke-width="1" />
<path d="M1098.90 463.00 L1098.90 467.00" fill="none" stroke="#c0c0c0" stroke-width="1" />
<path d="M1116.10 463.00 L1116.10 467.00" fill="none" stroke="#c0c0c0" stroke-width="1" />
<path d="M1133.30 463.00 L1133.30 467.00" fill="none" stroke="#c0c0c0" stroke-width="1" />
<path d="M1150.50 463.00 L1150.50 467.00" fill="none" stroke="#c0c0c0" stroke-width="1" />
<path d="M1167.70 463.00 L1167.70 467.00" fill="none" stroke="#c0c0c0" stroke-width="1" />
<path d="M1184.90 463.00 L1184.90 467.00" fill="none" stroke="#c0c0c0" stroke-width="1" />
<path d="M1202.10 463.00 L1202.10 467.00" fill="none" stroke="#c0c0c0" stroke-width="1" />
<path d="M1219.30 463.00 L1219.30 467.00" fill="none" stroke="#c0c0c0" stroke-width="1" />
<path d="M1236.50 463.00 L1236.50 467.00" fill="none" stroke="#c0c0c0" stroke-width="1" />
<path d="M720.50 113.20 L725.50 113.20" fill="none" stroke="#a8a8a8" stroke-width="1" />
<path d="M720.50 125.00 L725.50 125.00" fill="none" stroke="#a8a8a8" stroke-width="1" />
<path d="M720.50 136.81 L725.50 136.81" fill="none" stroke="#a8a8a8" stroke-width="1" />
<path d="M720.50 148.61 L725.50 148.61" fill="none" stroke="#a8a8a8" stroke-width="1" />
<path d="M720.50 160.41 L725.50 160.41" fill="none" stroke="#a8a8a8" stroke-width="1" />
<path d="M720.50 172.22 L725.50 172.22" fill="none" stroke="#a8a8a8" stroke-width="1" />
<path d="M720.50 184.02 L725.50 184.02" fill="none" stroke="#a8a8a8" stroke-width="1" />
<path d="M720.50 195.82 L725.50 195.82" fill="none" stroke="#a8a8a8" stroke-width="1" />
<path d="M720.50 207.63 L725.50 207.63" fill="none" stroke="#a8a8a8" stroke-width="1" />
<path d="M720.50 219.43 L725.50 219.43" fill="none" stroke="#a8a8a8" stroke-width="1" />
<path d="M720.50 231.23 L725.50 231.23" fill="none" stroke="#a8a8a8" stroke-width="1" />
<path d="M720.50 243.04 L725.50 243.04" fill="none" stroke="#a8a8a8" stroke-width="1" />
<path d="M720.50 254.84 L725.50 254.84" fill="none" stroke="#a8a8a8" stroke-width="1" />
<path d="M720.50 266.64 L725.50 266.64" fill="none" stroke="#a8a8a8" stroke-width="1" />
<path d="M720.50 278.45 L725.50 278.45" fill="none" stroke="#a8a8a8" stroke-width="1" />
<path d="M720.50 290.25 L725.50 290.25" fill="none" stroke="#a8a8a8" stroke-width="1" />
<path d="M720.50 302.05 L725.50 302.05" fill="none" stroke="#a8a8a8" stroke-width="1" />
<path d="M720.50 313.86 L725.50 313.86" fill="none" stroke="#a8a8a8" stroke-width="1" />
<path d="M720.50 325.66 L725.50 325.66" fill="none" stroke="#a8a8a8" stroke-width="1" />
<path d="M720.50 337.46 L725.50 337.46" fill="none" stroke="#a8a8a8" stroke-width="1" />
<path d="M720.50 349.27 L725.50 349.27" fill="none" stroke="#a8a8a8" stroke-width="1" />
<path d="M720.50 361.07 L725.50 361.07" fill="none" stroke="#a8a8a8" stroke-width="1" />
<path d="M720.50 372.87 L725.50 372.87" fill="none" stroke="#a8a8a8" stroke-width="1" />
<path d="M720.50 384.68 L725.50 384.68" fill="none" stroke="#a8a8a8" stroke-width="1" />
<path d="M720.50 396.48 L725.50 396.48" fill="none" stroke="#a8a8a8" stroke-width="1" />
<path d="M720.50 408.28 L725.50 408.28" fill="none" stroke="#a8a8a8" stroke-width="1" />
<path d="M720.50 420.09 L725.50 420.09" fill="none" stroke="#a8a8a8" stroke-width="1" />
<path d="M720.50 431.89 L725.50 431.89" fill="none" stroke="#a8a8a8" stroke-width="1" />
<path d="M720.50 443.69 L725.50 443.69" fill="none" stroke="#a8a8a8" stroke-width="1" />
<path d="M720.50 455.50 L725.50 455.50" fill="none" stroke="#a8a8a8" stroke-width="1" />
<path d="M720.50 467.30 L725.50 467.30" fill="none" stroke="#a8a8a8" stroke-width="1" />
<path d="M720.50 467.30 L720.50 113.20 L772.10 113.20 L772.10 467.30 L823.80 467.30 L823.80 113.20 L875.30 113.20 L875.30 467.30 L927.00 467.30 L927.00 113.20 L979.20 113.20 L979.20 467.30 L1030.80 467.30 L1030.80 113.20 L1081.80 113.20 L1081.80 467.30 L1134.20 467.30 L1134.20 113.20 L1185.80 113.20 L1185.80 467.30 L1236.50 467.30" fill="none" stroke="#5cbe5c" stroke-width="1.4" stroke-linejoin="miter"/>
<path d="M720.60 111.50 L720.60 467.50" fill="none" stroke="#5cbe5c" stroke-width="1.6" />
<path d="M721.50 230.40 L771.10 230.40" fill="none" stroke="#e4e4a8" stroke-width="1.6" />
<path d="M773.10 289.70 L822.80 289.70" fill="none" stroke="#a8a868" stroke-width="1.4" />
<path d="M824.80 230.40 L874.30 230.40" fill="none" stroke="#e4e4a8" stroke-width="1.6" />
<path d="M876.30 289.70 L926.00 289.70" fill="none" stroke="#a8a868" stroke-width="1.4" />
<path d="M928.00 230.40 L978.20 230.40" fill="none" stroke="#e4e4a8" stroke-width="1.6" />
<path d="M980.20 289.70 L1029.80 289.70" fill="none" stroke="#a8a868" stroke-width="1.4" />
<path d="M1031.80 230.40 L1080.80 230.40" fill="none" stroke="#e4e4a8" stroke-width="1.6" />
<path d="M1082.80 289.70 L1133.20 289.70" fill="none" stroke="#a8a868" stroke-width="1.4" />
<path d="M1135.20 230.40 L1184.80 230.40" fill="none" stroke="#e4e4a8" stroke-width="1.6" />
<path d="M1186.80 289.70 L1235.50 289.70" fill="none" stroke="#a8a868" stroke-width="1.4" />
<path d="M1081.80 111.00 L1081.80 467.00" fill="none" stroke="#8fe08f" stroke-width="1.6" />
<path d="M1185.80 111.00 L1185.80 467.00" fill="none" stroke="#7fd07f" stroke-width="1.4" />
<path d="M1077.3999999999999 98.8 L1086.2 98.8 L1086.2 106.5 L1081.8 111.3 L1077.3999999999999 106.5 Z" fill="#000" stroke="#b0b0b0" stroke-width="1"/>
<text x="1081.8" y="107.3" font-size="9" fill="#35b8c8" text-anchor="middle" font-weight="normal" >a</text>
<path d="M1181.3999999999999 98.8 L1190.2 98.8 L1190.2 106.5 L1185.8 111.3 L1181.3999999999999 106.5 Z" fill="#000" stroke="#b0b0b0" stroke-width="1"/>
<text x="1185.8" y="107.3" font-size="9" fill="#35b8c8" text-anchor="middle" font-weight="normal" >b</text>
<path d="M1238 113.2 L1243.5 108.8 L1253.2 108.8 L1253.2 117.60000000000001 L1243.5 117.60000000000001 Z" fill="#000" stroke="#b0b0b0" stroke-width="1"/>
<text x="1248" y="116.2" font-size="9" fill="#35b8c8" text-anchor="middle" font-weight="normal" >c</text>
<path d="M1238 467.3 L1243.5 462.90000000000003 L1253.2 462.90000000000003 L1253.2 471.7 L1243.5 471.7 Z" fill="#000" stroke="#b0b0b0" stroke-width="1"/>
<text x="1248" y="470.3" font-size="9" fill="#35b8c8" text-anchor="middle" font-weight="normal" >d</text>
<text x="717.5" y="116.8" font-size="10" fill="#46c8bc" text-anchor="end" font-weight="normal" >12</text>
<text x="717.5" y="175.4" font-size="10" fill="#46c8bc" text-anchor="end" font-weight="normal" >8</text>
<text x="717.5" y="234.6" font-size="10" fill="#46c8bc" text-anchor="end" font-weight="normal" >4</text>
<text x="717.5" y="293.6" font-size="10" fill="#46c8bc" text-anchor="end" font-weight="normal" >0</text>
<text x="717.5" y="352.6" font-size="10" fill="#46c8bc" text-anchor="end" font-weight="normal" >-4</text>
<text x="717.5" y="411.40000000000003" font-size="10" fill="#46c8bc" text-anchor="end" font-weight="normal" >-8</text>
<text x="717.5" y="470.90000000000003" font-size="10" fill="#46c8bc" text-anchor="end" font-weight="normal" >-12</text>
<text x="720.5" y="480.2" font-size="10" fill="#46c8bc" text-anchor="middle" font-weight="normal" >0</text>
<text x="806.4" y="480.2" font-size="10" fill="#46c8bc" text-anchor="middle" font-weight="normal" textLength="26" lengthAdjust="spacingAndGlyphs" >83.3u</text>
<text x="892.5" y="480.2" font-size="10" fill="#46c8bc" text-anchor="middle" font-weight="normal" textLength="22" lengthAdjust="spacingAndGlyphs" >167u</text>
<text x="979" y="480.2" font-size="10" fill="#46c8bc" text-anchor="middle" font-weight="normal" textLength="23" lengthAdjust="spacingAndGlyphs" >250u</text>
<text x="1065.3" y="480.2" font-size="10" fill="#46c8bc" text-anchor="middle" font-weight="normal" textLength="23" lengthAdjust="spacingAndGlyphs" >333u</text>
<text x="1151.3" y="480.2" font-size="10" fill="#46c8bc" text-anchor="middle" font-weight="normal" textLength="22" lengthAdjust="spacingAndGlyphs" >417u</text>
<text x="1250.5" y="480.2" font-size="10" fill="#46c8bc" text-anchor="end" font-weight="normal" textLength="23.5" lengthAdjust="spacingAndGlyphs" >500u</text>
<text x="888.8" y="493" font-size="10" fill="#46c8bc" text-anchor="start" font-weight="normal" textLength="171" lengthAdjust="spacingAndGlyphs" >Ref=Ground X=83.3u/Div Y=voltage</text>
<path d="M673.50 107.50 L701.00 107.50" fill="none" stroke="#e0d890" stroke-width="1.2" />
<text x="674" y="118.6" font-size="11" fill="#c8c058" text-anchor="start" font-weight="bold" textLength="20" lengthAdjust="spacingAndGlyphs" >V(2)</text>
<path d="M673.50 122.80 L701.00 122.80" fill="none" stroke="#4fae4f" stroke-width="1.6" />
<text x="674" y="133.8" font-size="11" fill="#4cae4c" text-anchor="start" font-weight="bold" textLength="20" lengthAdjust="spacingAndGlyphs" >V(9)</text>
<text x="719.8" y="65.6" font-size="10.5" fill="#46c8bc" text-anchor="start" font-weight="normal" textLength="50" lengthAdjust="spacingAndGlyphs" >Xa: 349.1u</text>
<text x="785" y="65.6" font-size="10.5" fill="#46c8bc" text-anchor="start" font-weight="normal" textLength="52" lengthAdjust="spacingAndGlyphs" >Xb: 450.0u</text>
<text x="850" y="65.6" font-size="10.5" fill="#46c8bc" text-anchor="start" font-weight="normal" textLength="53" lengthAdjust="spacingAndGlyphs" >a-b:-100.9u</text>
<text x="916" y="65.6" font-size="10.5" fill="#46c8bc" text-anchor="start" font-weight="normal" textLength="58" lengthAdjust="spacingAndGlyphs" >freq: 9.913k</text>
<text x="719.8" y="78.7" font-size="10.5" fill="#46c8bc" text-anchor="start" font-weight="normal" textLength="43.5" lengthAdjust="spacingAndGlyphs" >Yc: 12.00</text>
<text x="785" y="78.7" font-size="10.5" fill="#46c8bc" text-anchor="start" font-weight="normal" textLength="44" lengthAdjust="spacingAndGlyphs" >Yd:-12.00</text>
<text x="850" y="78.7" font-size="10.5" fill="#46c8bc" text-anchor="start" font-weight="normal" textLength="48" lengthAdjust="spacingAndGlyphs" >c-d: 24.00</text>
</svg>
</body></html>
